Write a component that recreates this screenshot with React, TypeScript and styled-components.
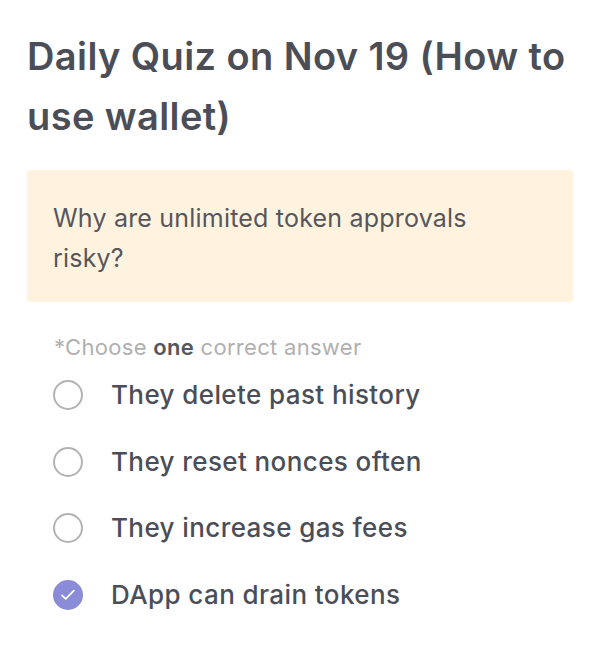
import React from 'react';
import styled, { createGlobalStyle } from 'styled-components';

const GlobalStyle = createGlobalStyle`
  body {
    margin: 0;
    background: #ffffff;
    font-family: Inter, "Noto Sans", sans-serif;
  }
`;

const Page = styled.div`
  padding: 26px 27px 20px 27px;
`;

const Title = styled.h1`
  margin: 0 0 24px 0;
  font-size: 38px;
  line-height: 60px;
  font-weight: 600;
  color: #4b4e57;
  letter-spacing: 0.4px;
`;

const QuestionBox = styled.div`
  background: #fff3e0;
  border-radius: 4px;
  padding: 28px 90px 24px 26px;
  font-size: 25px;
  line-height: 40px;
  color: #55575c;
  font-weight: 400;
  letter-spacing: 0.2px;
`;

const Hint = styled.div`
  margin: 33px 0 0 27px;
  font-size: 22px;
  line-height: 24px;
  color: #b0b0b0;
  letter-spacing: 0.3px;

  b {
    color: #55575c;
    font-weight: 600;
  }
`;

const Options = styled.div`
  display: flex;
  flex-direction: column;
  margin: 14px 0 0 26px;
  gap: 22.5px;
`;

const Option = styled.label`
  display: flex;
  align-items: center;
  gap: 28px;
  font-size: 26px;
  line-height: 44px;
  color: #4b4e57;
  font-weight: 500;
  letter-spacing: 0.4px;
`;

const Radio = styled.span<{ checked?: boolean }>`
  width: 30px;
  height: 30px;
  box-sizing: border-box;
  border-radius: 50%;
  flex-shrink: 0;
  display: flex;
  align-items: center;
  justify-content: center;
  border: ${({ checked }) => (checked ? 'none' : '2px solid #b3b3b3')};
  background: ${({ checked }) => (checked ? '#8a8cd8' : '#ffffff')};
`;

const answers = [
  { text: 'They delete past history', checked: false },
  { text: 'They reset nonces often', checked: false },
  { text: 'They increase gas fees', checked: false },
  { text: 'DApp can drain tokens', checked: true },
];

export default function App() {
  return (
    <Page>
      <GlobalStyle />
      <Title>Daily Quiz on Nov 19 (How to use wallet)</Title>
      <QuestionBox>Why are unlimited token approvals risky?</QuestionBox>
      <Hint>
        *Choose <b>one</b> correct answer
      </Hint>
      <Options>
        {answers.map((a) => (
          <Option key={a.text}>
            <Radio checked={a.checked}>
              {a.checked && (
                <svg width="18" height="18" viewBox="0 0 18 18" fill="none">
                  <path d="M3 9.4l3.7 3.5 8.1-8.2" stroke="#fff" strokeWidth="1.8" strokeLinecap="round" strokeLinejoin="round" />
                </svg>
              )}
            </Radio>
            {a.text}
          </Option>
        ))}
      </Options>
    </Page>
  );
}
